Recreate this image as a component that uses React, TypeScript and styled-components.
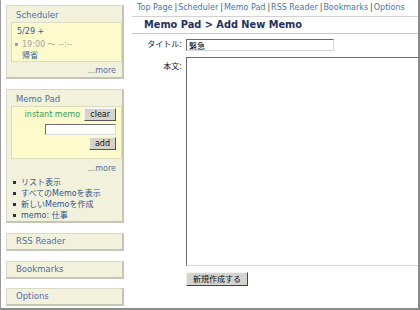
import React from "react";
import styled, { createGlobalStyle } from "styled-components";

const Global = createGlobalStyle`
  html, body { margin: 0; padding: 0; background: #fff; }
`;

const Frame = styled.div`
  width: 420px;
  height: 310px;
  box-sizing: border-box;
  border-left: 1px solid #9a9a9a;
  border-right: 2px solid #8a8a8a;
  border-bottom: 2px solid #8a8a8a;
  display: flex;
  overflow: hidden;
  background: #fff;
  font-family: "DejaVu Sans", "Noto Sans CJK JP", sans-serif;
  font-size: 8px;
  color: #222;
`;

const Sidebar = styled.div`
  width: 131px;
  flex: none;
  box-sizing: border-box;
  padding: 5px 0 0 5px;
  display: flex;
  flex-direction: column;
  gap: 9px;
`;

const Panel = styled.div<{ $extra?: boolean }>`
  width: 118px;
  box-sizing: border-box;
  background: #f2f2dc;
  border: 1px solid #d8d8c8;
  border-right: 2px solid #c4c4b4;
  border-bottom: 2px solid #c4c4b4;
  margin-bottom: ${(p) => (p.$extra ? "1px" : "0")};
`;

const PanelTitle = styled.div<{ $simple?: boolean }>`
  padding: ${(p) => (p.$simple ? "0 0 0 9px" : "3px 0 0 9px")};
  line-height: ${(p) => (p.$simple ? "15px" : "12px")};
  font-size: 8.5px;
  color: #4f6f9f;
`;

const InnerBox = styled.div`
  margin: 1px 0 0 4px;
  background: #fdfacc;
  border: 1px solid #dcdcc0;
`;

const SchedBox = styled(InnerBox)`
  padding: 3px 0 0 3px;
`;

const DateLine = styled.div`
  padding-left: 2px;
  line-height: 11px;
  color: #2f5c9a;
  margin-bottom: 2px;
`;

const SchedItem = styled.div<{ $muted?: boolean; $bullet?: boolean }>`
  display: flex;
  align-items: center;
  line-height: 11px;
  color: ${(p) => (p.$muted ? "#a4a4a4" : "#2f5c9a")};
  &::before {
    content: "";
    width: 3px;
    height: 3px;
    margin-right: 4px;
    background: ${(p) => (p.$bullet ? "#9aa0b0" : "transparent")};
  }
`;

const More = styled.div<{ $top: number }>`
  text-align: right;
  line-height: 11px;
  padding: ${(p) => p.$top}px 6px 1px 0;
  color: #4f6f9f;
`;

const MemoBox = styled(InnerBox)`
  padding: 1px 5px 8px 0;
  display: flex;
  flex-direction: column;
  align-items: flex-end;
`;

const MemoRow = styled.div`
  display: flex;
  align-items: center;
  gap: 4px;
`;

const Green = styled.span`
  color: #2f9a6a;
`;

const SmallButton = styled.button<{ $top?: number }>`
  height: 13px;
  box-sizing: border-box;
  margin: ${(p) => p.$top ?? 0}px 0 0 0;
  padding: 0 5px;
  background: #d6d3cc;
  border: 1px solid;
  border-color: #f4f4f4 #555 #555 #f4f4f4;
  font-family: "DejaVu Sans", "Noto Sans CJK JP", sans-serif;
  font-size: 8px;
  line-height: 11px;
  color: #111;
`;

const SmallInput = styled.input`
  width: 71px;
  height: 11px;
  box-sizing: border-box;
  margin-top: 3px;
  padding: 0 2px;
  background: #fff;
  border: 1px solid;
  border-color: #6f6f6f #d8d8d8 #d8d8d8 #6f6f6f;
  font-size: 8px;
`;

const LinkList = styled.ul`
  list-style: none;
  margin: 2px 0 0 0;
  padding: 0 0 0 6px;
`;

const LinkItem = styled.li`
  display: flex;
  align-items: center;
  line-height: 11px;
  color: #2d5591;
  &::before {
    content: "";
    width: 3px;
    height: 3px;
    margin-right: 5px;
    background: #26305a;
  }
`;

const Main = styled.div`
  flex: 1;
  min-width: 0;
  display: flex;
  flex-direction: column;
`;

const Nav = styled.div`
  line-height: 16px;
  padding-left: 5px;
  border-bottom: 1px solid #d2d2d2;
  white-space: nowrap;
  font-size: 8px;
`;

const NavLink = styled.span`
  color: #4a72aa;
`;

const Sep = styled.span`
  color: #444;
  margin: 0 1px 0 2px;
`;

const Heading = styled.div`
  line-height: 16px;
  padding-left: 12px;
  border-bottom: 1px solid #c8c8c8;
  font-size: 9.8px;
  font-weight: bold;
  color: #26305c;
  white-space: nowrap;
`;

const Form = styled.div`
  display: grid;
  grid-template-columns: 50px auto;
  column-gap: 4px;
  row-gap: 6px;
  padding-top: 5px;
  align-items: start;
`;

const Label = styled.div<{ $pad: number }>`
  text-align: right;
  line-height: 11px;
  padding-top: ${(p) => p.$pad}px;
  color: #222;
`;

const TitleInput = styled.input`
  width: 148px;
  height: 12px;
  box-sizing: border-box;
  padding: 0 2px;
  background: #fff;
  border: 1px solid;
  border-color: #6a6a6a #d6d6d6 #d6d6d6 #6a6a6a;
  font-family: "Noto Sans CJK JP", sans-serif;
  font-size: 8px;
  line-height: 10px;
  color: #000;
`;

const Body = styled.textarea`
  width: 262px;
  height: 209px;
  box-sizing: border-box;
  margin: 0;
  padding: 1px 2px;
  resize: none;
  background: #fff;
  border: 1px solid;
  border-color: #6a6a6a #d6d6d6 #d6d6d6 #6a6a6a;
`;

const SubmitButton = styled.button`
  grid-column: 2;
  justify-self: start;
  height: 14px;
  box-sizing: border-box;
  padding: 0 6px;
  background: #d6d3cc;
  border: 1px solid;
  border-color: #f4f4f4 #444 #444 #f4f4f4;
  font-family: "Noto Sans CJK JP", sans-serif;
  font-size: 8px;
  line-height: 12px;
  color: #111;
`;

const navItems = ["Top Page", "Scheduler", "Memo Pad", "RSS Reader", "Bookmarks", "Options"];

export default function App() {
  return (
    <>
      <Global />
      <Frame>
        <Sidebar>
          <Panel $extra>
            <PanelTitle>Scheduler</PanelTitle>
            <SchedBox>
              <DateLine>5/29 +</DateLine>
              <SchedItem $muted $bullet>19:00 〜 --:--</SchedItem>
              <SchedItem>帰省</SchedItem>
            </SchedBox>
            <More $top={3}>...more</More>
          </Panel>
          <Panel $extra>
            <PanelTitle>Memo Pad</PanelTitle>
            <MemoBox>
              <MemoRow>
                <Green>instant memo</Green>
                <SmallButton>clear</SmallButton>
              </MemoRow>
              <SmallInput type="text" />
              <SmallButton $top={2}>add</SmallButton>
            </MemoBox>
            <More $top={4}>...more</More>
            <LinkList>
              <LinkItem>リスト表示</LinkItem>
              <LinkItem>すべてのMemoを表示</LinkItem>
              <LinkItem>新しいMemoを作成</LinkItem>
              <LinkItem>memo: 仕事</LinkItem>
            </LinkList>
          </Panel>
          <Panel $extra>
            <PanelTitle $simple>RSS Reader</PanelTitle>
          </Panel>
          <Panel>
            <PanelTitle $simple>Bookmarks</PanelTitle>
          </Panel>
          <Panel>
            <PanelTitle $simple>Options</PanelTitle>
          </Panel>
        </Sidebar>
        <Main>
          <Nav>
            {navItems.map((n, i) => (
              <React.Fragment key={n}>
                {i > 0 && <Sep>|</Sep>}
                <NavLink>{n}</NavLink>
              </React.Fragment>
            ))}
          </Nav>
          <Heading>Memo Pad &gt; Add New Memo</Heading>
          <Form>
            <Label $pad={0}>タイトル:</Label>
            <TitleInput type="text" defaultValue="緊急" />
            <Label $pad={4}>本文:</Label>
            <Body />
            <SubmitButton>新規作成する</SubmitButton>
          </Form>
        </Main>
      </Frame>
    </>
  );
}
